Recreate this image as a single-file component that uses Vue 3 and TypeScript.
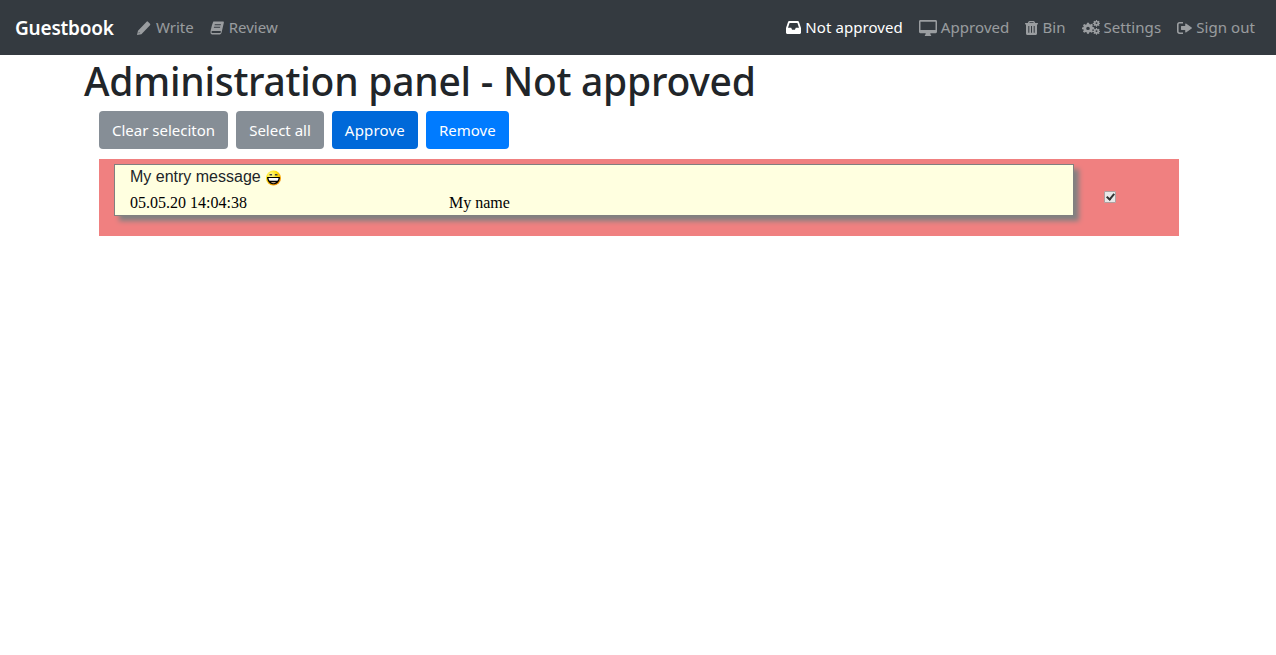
<script setup lang="ts">
interface NavIcon { w: number; h: number; vb: string; d: string }
const leftLinks = [
  { label: 'Write', icon: 'pencil' },
  { label: 'Review', icon: 'book' },
]
const rightLinks = [
  { label: 'Not approved', icon: 'inbox', active: true },
  { label: 'Approved', icon: 'desktop', active: false },
  { label: 'Bin', icon: 'trash', active: false },
  { label: 'Settings', icon: 'cogs', active: false },
  { label: 'Sign out', icon: 'signout', active: false },
]
const icons: Record<string, NavIcon> = {
  pencil: { w: 14, h: 14, vb: '0 0.5 14 13.5', d: 'M0 14l1-4.200L9.600 1.200a1 1 0 0 1 1.400 0l2 2a1 1 0 0 1 0 1.400L4.400 13.200zM1.600 12.400l1.300-.3-1-1z' },
  book: { w: 14, h: 14, vb: '0 .5 14 12.300', d: 'M3.400 1H13c.8 0 1 .6.8 1.300l-2.200 8.400c-.3 1-.9 1.600-1.900 1.600H2.200C1.200 12.300.3 11.500.5 10.100.6 9.100 1 7.600 1.400 6.300 2 4.300 2.600 2.200 3.400 1zM4.800 3.300l-.3 1h6.200l.3-1zM4.100 5.500l-.3 1h6.200l.3-1zM2.500 9.300c-.7 0-1 .4-1 .9s.4.900 1 .9h7.400c.4 0 .7-.2.8-.6l.1-1.200z' },
  inbox: { w: 15, h: 13, vb: '0 1.500 15 11.200', d: 'M3.200 1.500h8.600c.5 0 .9.300 1.100.7L15 7.500V11.500c0 .7-.5 1.200-1.200 1.200H1.200C.5 12.700 0 12.200 0 11.500V7.500L2.100 2.200c.2-.4.600-.7 1.100-.7zM3.600 3.200L2 7.300h3.200l.9 1.800h2.800l.9-1.800H13L11.400 3.200z' },
  desktop: { w: 18, h: 16, vb: '0 1 18 14.500', d: 'M1.300 1h15.400c.7 0 1.300.6 1.300 1.300v9.400c0 .7-.6 1.300-1.300 1.300h-5.400c0 1 .4 1.400.9 2v.5H5.800V15c.5-.6.9-1 .9-2H1.300C.6 13 0 12.400 0 11.700V2.300C0 1.600.6 1 1.300 1zM1.500 2.500v7.600h15V2.500z' },
  trash: { w: 13, h: 14, vb: '0 .5 13 14', d: 'M4.500.5h4c.5 0 .9.300 1.100.8l.6 1.200h2.300c.3 0 .5.200.5.500v.6c0 .3-.2.500-.5.500H12V13c0 .9-.6 1.500-1.300 1.500H2.300C1.600 14.500 1 13.900 1 13V4.100H.5C.2 4.100 0 3.900 0 3.600V3c0-.3.2-.5.500-.5h2.300l.6-1.200c.2-.5.600-.8 1.100-.8zM4.700 1.700l-.4.8h4.400l-.4-.8zM3.300 5.500v6.800h1V5.500zM6 5.500v6.800h1V5.500zM8.700 5.500v6.800h1V5.500z' },
  cogs: { w: 18, h: 16, vb: '0 .5 18 18', d: 'M5 3.500h2l.3 1.500 1.100.5 1.300-.9 1.400 1.400-.9 1.300.5 1.100 1.500.3v2l-1.500.3-.5 1.100.9 1.300-1.400 1.400-1.300-.9-1.100.5-.3 1.500H5l-.3-1.500-1.100-.5-1.300.9-1.400-1.400.9-1.300-.5-1.100L0 11V9l1.300-.3.500-1.100-.9-1.300 1.400-1.400 1.300.9 1.100-.5zM6 8.200a1.800 1.800 0 1 0 0 3.600 1.800 1.800 0 0 0 0-3.600zM14 .5h1l.2 1 .7.300.9-.5.7.7-.5.9.3.700.7.200v1l-.7.200-.3.700.5.900-.7.700-.9-.5-.7.300-.2 1h-1l-.2-1-.7-.3-.9.500-.7-.7.500-.9-.3-.7-1-.2v-1l1-.2.3-.7-.5-.9.700-.7.900.500.700-.3zM14.500 3a1 1 0 1 0 0 2 1 1 0 0 0 0-2zM14 9.500h1l.2 1 .7.300.9-.5.7.7-.5.9.3.700.7.200v1l-.7.200-.3.700.5.900-.7.700-.9-.5-.7.300-.2 1h-1l-.2-1-.7-.3-.9.500-.7-.7.500-.9-.3-.7-1-.2v-1l1-.2.3-.7-.5-.9.700-.7.900.500.700-.3zM14.500 12a1 1 0 1 0 0 2 1 1 0 0 0 0-2z' },
  signout: { w: 15, h: 12, vb: '0 1.500 15 12', d: 'M2.500 1.500H6v1.500H2.800c-.7 0-1.200.5-1.200 1.200v6.600c0 .7.5 1.200 1.200 1.200H6v1.500H2.500C1.100 13.500 0 12.400 0 11V4C0 2.600 1.100 1.500 2.500 1.500zM9 3l5.700 4.100c.3.200.3.600 0 .8L9 12c-.4.300-.8 0-.8-.4V9.500H4.500c-.3 0-.5-.2-.5-.5V6c0-.3.2-.5.500-.5h3.700V3.400C8.200 3 8.600 2.700 9 3z' },
}
</script>

<template>
  <div class="page">
    <nav class="navbar">
      <span class="brand">Guestbook</span>
      <ul class="nav">
        <li v-for="l in leftLinks" :key="l.label" class="link">
          <svg class="icon" :width="icons[l.icon].w" :height="icons[l.icon].h" :viewBox="icons[l.icon].vb" preserveAspectRatio="none"><path :d="icons[l.icon].d" fill="currentColor" fill-rule="evenodd" /></svg>
          <span>{{ l.label }}</span>
        </li>
      </ul>
      <ul class="nav right">
        <li v-for="l in rightLinks" :key="l.label" class="link" :class="{ active: l.active }">
          <svg class="icon" :width="icons[l.icon].w" :height="icons[l.icon].h" :viewBox="icons[l.icon].vb" preserveAspectRatio="none"><path :d="icons[l.icon].d" fill="currentColor" fill-rule="evenodd" /></svg>
          <span>{{ l.label }}</span>
        </li>
      </ul>
    </nav>

    <main class="container">
      <h1 class="title">Administration panel - Not approved</h1>
      <div class="content">
        <div class="actions">
          <button class="btn grey">Clear seleciton</button>
          <button class="btn grey">Select all</button>
          <button class="btn dark">Approve</button>
          <button class="btn blue">Remove</button>
        </div>
        <div class="entry-row">
          <div class="entry">
            <div class="message">
              My entry message
              <svg class="smiley" width="15" height="16" viewBox="0.5 1 14 14">
                <defs>
                  <radialGradient id="face" cx="35%" cy="30%" r="80%">
                    <stop offset="0%" stop-color="#ffffa0" />
                    <stop offset="50%" stop-color="#ffe000" />
                    <stop offset="100%" stop-color="#f07800" />
                  </radialGradient>
                </defs>
                <circle cx="7.500" cy="8" r="7" fill="url(#face)" />
                <path d="M1.500 7h12c0 4.200-2.600 6.800-6 6.800S1.500 11.200 1.500 7z" fill="#000" />
                <path d="M2.800 8h9.400c-.2 1.200-.5 2-1 2.600H3.800C3.300 10 3 9.200 2.800 8z" fill="#fff" />
                <path d="M5 12h5c-.7.500-1.500.8-2.500.8S5.700 12.500 5 12z" fill="#ffd0a0" />
                <path d="M3.800 4.300h2.400v1.300H3.800zM8.800 4.300h2.400v1.300H8.800z" fill="#444" />
              </svg>
            </div>
            <div class="meta">
              <span class="date">05.05.20 14:04:38</span>
              <span>My name</span>
            </div>
          </div>
          <div class="check-cell">
            <input type="checkbox" class="check" checked />
          </div>
        </div>
      </div>
    </main>
  </div>
</template>

<style>
html, body { margin: 0; background: #fff; }
</style>

<style scoped>
.page {
  font-family: "Noto Sans", "Open Sans", sans-serif;
  color: #212529;
  min-height: 655px;
}
.navbar {
  height: 55px;
  box-sizing: border-box;
  background: #343a40;
  display: flex;
  align-items: center;
  padding: 0 13px 0 15px;
}
.brand {
  color: #fff;
  font-size: 19px;
  font-weight: 600;
  letter-spacing: -0.2px;
  width: 99px;
  margin-right: 15px;
  white-space: nowrap;
}
.nav {
  display: flex;
  list-style: none;
  margin: 0;
  padding: 0;
}
.nav.right { margin-left: auto; }
.nav.right .link { gap: 4px; letter-spacing: 0.07px; }
.link {
  display: flex;
  align-items: center;
  gap: 5px;
  padding: 0 8px;
  font-size: 15px;
  line-height: 20px;
  color: rgba(255, 255, 255, 0.5);
  white-space: nowrap;
}
.link span { margin-top: -2px; }
.link.active { color: #fff; }
.icon { flex: none; }
.container {
  padding: 0 82px 0 84px;
}
.title {
  margin: 0 0 4px;
  font-size: 39px;
  font-weight: 500;
  line-height: 52px;
  letter-spacing: -0.25px;
  white-space: nowrap;
}
.content { padding: 0 15px; }
.actions {
  display: flex;
  gap: 8px;
  margin-bottom: 10px;
}
.btn {
  height: 38px;
  padding: 0 13px;
  border: 0;
  border-radius: 4px;
  color: #fff;
  font: 15px "Noto Sans", "Open Sans", sans-serif;
  white-space: nowrap;
}
.grey { background: #868e96; }
.dark { background: #0069d9; letter-spacing: 0.2px; }
.blue { background: #007bff; }
.entry-row {
  background: #f08080;
  height: 77px;
  box-sizing: border-box;
  padding: 5px 15px 0;
  display: flex;
}
.entry {
  width: 960px;
  height: 52px;
  box-sizing: border-box;
  background: #ffffe0;
  border: 1px solid #808080;
  box-shadow: 5px 5px 5px #808080;
  padding-left: 15px;
}
.message {
  font: 16px/22px "Liberation Sans", sans-serif;
  color: #212529;
  display: flex;
  align-items: center;
  gap: 5px;
  padding-top: 1px;
}
.smiley { flex: none; margin-top: 1px; }
.meta {
  font: 16px/20px "Liberation Serif", serif;
  color: #000;
  margin-top: 5px;
  display: flex;
}
.date { width: 319px; }
.check-cell {
  width: 72px;
  display: flex;
  justify-content: center;
  padding-top: 27px;
}
.check {
  appearance: none;
  position: relative;
  width: 12px;
  height: 12px;
  margin: 0;
  box-sizing: border-box;
  background: #e8e8e8;
  border: 1px solid #b0a0a0;
  border-radius: 1px;
}
.check::after {
  content: "";
  position: absolute;
  left: 3px;
  top: 0;
  width: 3px;
  height: 6px;
  border: solid #333;
  border-width: 0 2px 2px 0;
  transform: rotate(40deg);
}
</style>
